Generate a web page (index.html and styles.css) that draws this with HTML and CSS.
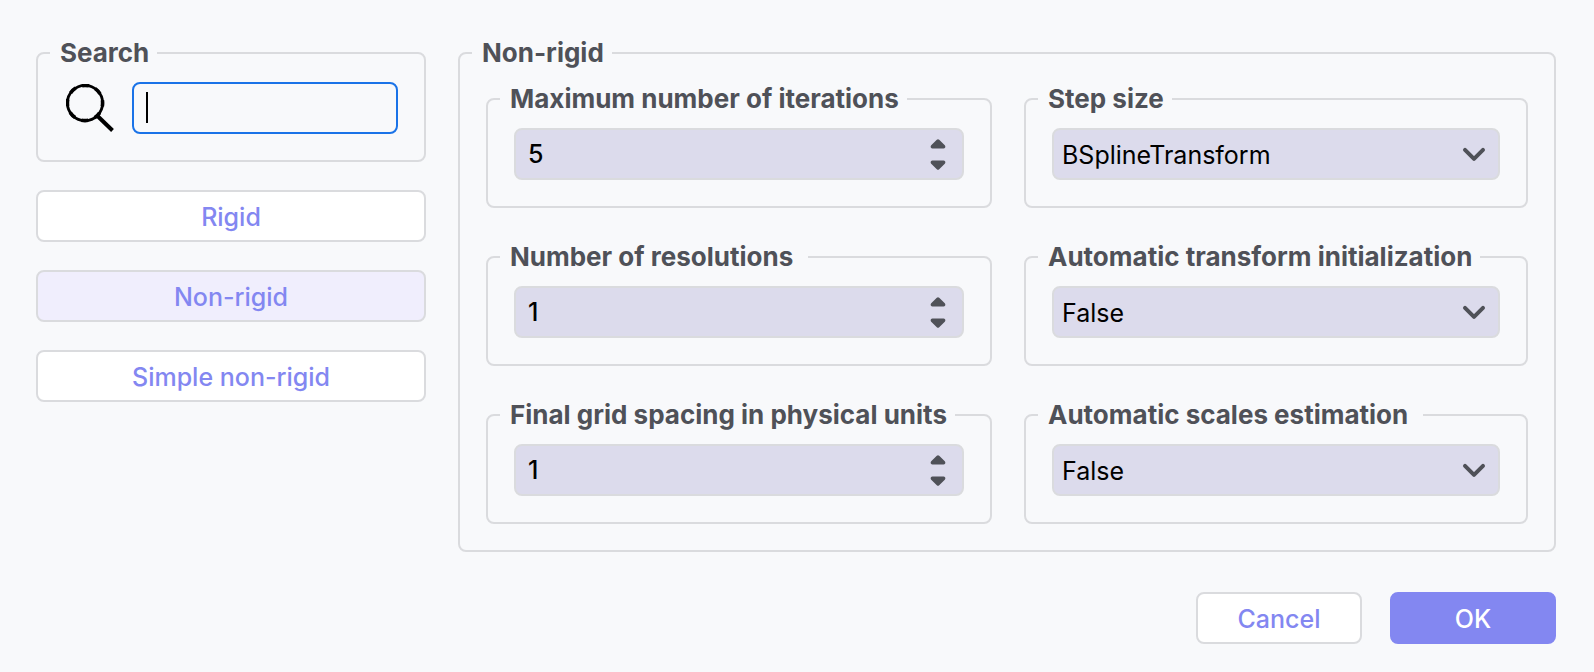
FILE: index.html
```html
<!DOCTYPE html>
<html lang="en">
<head>
<meta charset="utf-8">
<meta name="viewport" content="width=device-width, initial-scale=1">
<title>Registration settings</title>
<link rel="stylesheet" href="styles.css">
</head>
<body>
<svg width="0" height="0" class="symbols" aria-hidden="true">
  <symbol id="tri-up" viewBox="0 0 16 10"><path d="M6.8 0.8 Q8 -0.2 9.2 0.8 L14.8 6.2 Q15.8 7.6 15 8.8 Q14.6 9.5 13.6 9.5 H2.4 Q1.4 9.5 1 8.8 Q0.2 7.6 1.2 6.2 Z" fill="currentColor"/></symbol>
  <symbol id="tri-down" viewBox="0 0 16 10"><path d="M6.8 9.2 Q8 10.2 9.2 9.2 L14.8 3.8 Q15.8 2.4 15 1.2 Q14.6 0.5 13.6 0.5 H2.4 Q1.4 0.5 1 1.2 Q0.2 2.4 1.2 3.8 Z" fill="currentColor"/></symbol>
  <symbol id="chevron" viewBox="0 0 24 16"><path d="M3 3.8 L12 12.8 L21 3.8" fill="none" stroke="currentColor" stroke-width="4" stroke-linecap="round" stroke-linejoin="round"/></symbol>
</svg>
<form class="dialog">
  <div class="columns">
    <nav class="sidebar">
      <fieldset class="group">
        <legend class="group-title"><label for="search">Search</label></legend>
        <div class="group-body search-row">
          <svg class="search-icon" viewBox="0 0 48 48" aria-hidden="true">
            <circle cx="19" cy="19" r="17.6" fill="none" stroke="#000" stroke-width="2.8"/>
            <circle cx="19" cy="19" r="17.6" fill="none" stroke="#000" stroke-width="3.6" stroke-dasharray="7 6.82" stroke-dashoffset="3.5"/>
            <path d="M31.5 32 L46.5 46.5" fill="none" stroke="#000" stroke-width="4"/>
          </svg>
          <div class="search-box">
            <input class="search-input" id="search" type="text">
            <span class="caret"></span>
          </div>
        </div>
      </fieldset>
      <button class="button" type="button">Rigid</button>
      <button class="button button-selected" type="button">Non-rigid</button>
      <button class="button" type="button">Simple non-rigid</button>
    </nav>
    <fieldset class="group">
      <legend class="group-title">Non-rigid</legend>
      <div class="group-body settings">
        <fieldset class="group">
          <legend class="group-title"><label for="iterations">Maximum number of iterations</label></legend>
          <div class="group-body"><div class="number">
            <input class="number-input" id="iterations" type="number" value="5">
            <div class="stepper"><button class="step" type="button" aria-label="Increase"><svg><use href="#tri-up"/></svg></button><button class="step" type="button" aria-label="Decrease"><svg><use href="#tri-down"/></svg></button></div>
          </div></div>
        </fieldset>
        <fieldset class="group">
          <legend class="group-title"><label for="step">Step size</label></legend>
          <div class="group-body"><div class="choice">
            <select class="choice-select" id="step"><option>BSplineTransform</option></select>
            <svg class="choice-arrow"><use href="#chevron"/></svg>
          </div></div>
        </fieldset>
        <fieldset class="group">
          <legend class="group-title group-title-wide"><label for="resolutions">Number of resolutions</label></legend>
          <div class="group-body"><div class="number">
            <input class="number-input" id="resolutions" type="number" value="1">
            <div class="stepper"><button class="step" type="button" aria-label="Increase"><svg><use href="#tri-up"/></svg></button><button class="step" type="button" aria-label="Decrease"><svg><use href="#tri-down"/></svg></button></div>
          </div></div>
        </fieldset>
        <fieldset class="group">
          <legend class="group-title"><label for="init">Automatic transform initialization</label></legend>
          <div class="group-body"><div class="choice">
            <select class="choice-select" id="init"><option>False</option><option>True</option></select>
            <svg class="choice-arrow"><use href="#chevron"/></svg>
          </div></div>
        </fieldset>
        <fieldset class="group">
          <legend class="group-title"><label for="spacing">Final grid spacing in physical units</label></legend>
          <div class="group-body"><div class="number">
            <input class="number-input" id="spacing" type="number" value="1">
            <div class="stepper"><button class="step" type="button" aria-label="Increase"><svg><use href="#tri-up"/></svg></button><button class="step" type="button" aria-label="Decrease"><svg><use href="#tri-down"/></svg></button></div>
          </div></div>
        </fieldset>
        <fieldset class="group">
          <legend class="group-title group-title-wide"><label for="scales">Automatic scales estimation</label></legend>
          <div class="group-body"><div class="choice">
            <select class="choice-select" id="scales"><option>False</option><option>True</option></select>
            <svg class="choice-arrow"><use href="#chevron"/></svg>
          </div></div>
        </fieldset>
      </div>
    </fieldset>
  </div>
  <div class="actions">
    <button class="button action" type="button">Cancel</button>
    <button class="button action button-primary" type="submit">OK</button>
  </div>
</form>
</body>
</html>
```
FILE: styles.css
```css
:root {
  --line: #dadbde;
  --ink: #4f5158;
  --accent: #8387f1;
  --field: #dcdbec;
}

* {
  box-sizing: border-box;
}

body {
  margin: 0;
  background: #f8f9fb;
  font: 25px/30px Inter, "Liberation Sans", sans-serif;
  color: var(--ink);
}

input,
select,
button {
  font: inherit;
  margin: 0;
}

.symbols {
  position: absolute;
}

.dialog {
  padding: 38px 38px 28px 36px;
}

.columns {
  display: grid;
  grid-template-columns: minmax(0, 390fr) minmax(0, 1098fr);
  gap: 32px;
}

.sidebar {
  display: flex;
  flex-direction: column;
  gap: 28px;
}

.group {
  min-width: 0;
  margin: 0;
  padding: 0 12px 26px;
  border: 2px solid var(--line);
  border-radius: 8px;
}

.group-title {
  padding: 0 8px 0 10px;
  font-size: 26px;
  font-weight: 700;
  white-space: nowrap;
}

.group-title-wide {
  padding-right: 15px;
}

.group-body {
  padding: 14px 14px 0;
}

.search-row {
  display: flex;
  align-items: center;
  gap: 18px;
  padding-left: 16px;
}

.search-icon {
  flex: none;
  width: 48px;
  height: 48px;
}

.search-box {
  position: relative;
  flex: 1;
  min-width: 0;
}

.search-input {
  display: block;
  width: 100%;
  height: 52px;
  padding: 0 12px;
  border: 2px solid #1a73e8;
  border-radius: 8px;
  background: transparent;
  color: #000;
  caret-color: transparent;
  outline: none;
}

.caret {
  position: absolute;
  top: 10px;
  left: 14px;
  width: 2px;
  height: 31px;
  background: #000;
}

.button {
  height: 52px;
  padding: 2px 16px 0;
  border: 2px solid var(--line);
  border-radius: 8px;
  background: #fff;
  color: var(--accent);
  font-weight: 500;
}

.button-selected {
  background: #f0eefd;
}

.button-primary {
  border-color: var(--accent);
  background: var(--accent);
  color: #fff;
}

.settings {
  display: grid;
  grid-template-columns: minmax(0, 253fr) minmax(0, 252fr);
  gap: 34px 32px;
  padding-top: 16px;
}

.number {
  display: flex;
  align-items: center;
  height: 52px;
  padding-right: 12px;
  border: 2px solid var(--line);
  border-radius: 8px;
  background: var(--field);
}

.number-input {
  flex: 1;
  min-width: 0;
  padding: 0 12px;
  border: 0;
  background: transparent;
  color: #000;
  font-weight: 500;
  outline: none;
  appearance: textfield;
}

.stepper {
  display: flex;
  flex-direction: column;
}

.step {
  display: grid;
  place-items: center;
  width: 24px;
  height: 21px;
  padding: 0;
  border: 0;
  background: transparent;
  color: var(--ink);
}

.step svg {
  width: 16px;
  height: 10px;
}

.choice {
  position: relative;
}

.choice-select {
  display: block;
  width: 100%;
  height: 52px;
  padding: 2px 48px 0 8px;
  border: 2px solid var(--line);
  border-radius: 8px;
  background: var(--field);
  color: #000;
  appearance: none;
}

.choice-arrow {
  position: absolute;
  top: 18px;
  right: 14px;
  width: 24px;
  height: 16px;
  color: var(--ink);
  pointer-events: none;
}

.actions {
  display: flex;
  justify-content: flex-end;
  gap: 28px;
  margin-top: 40px;
}

.action {
  width: 166px;
}
```
